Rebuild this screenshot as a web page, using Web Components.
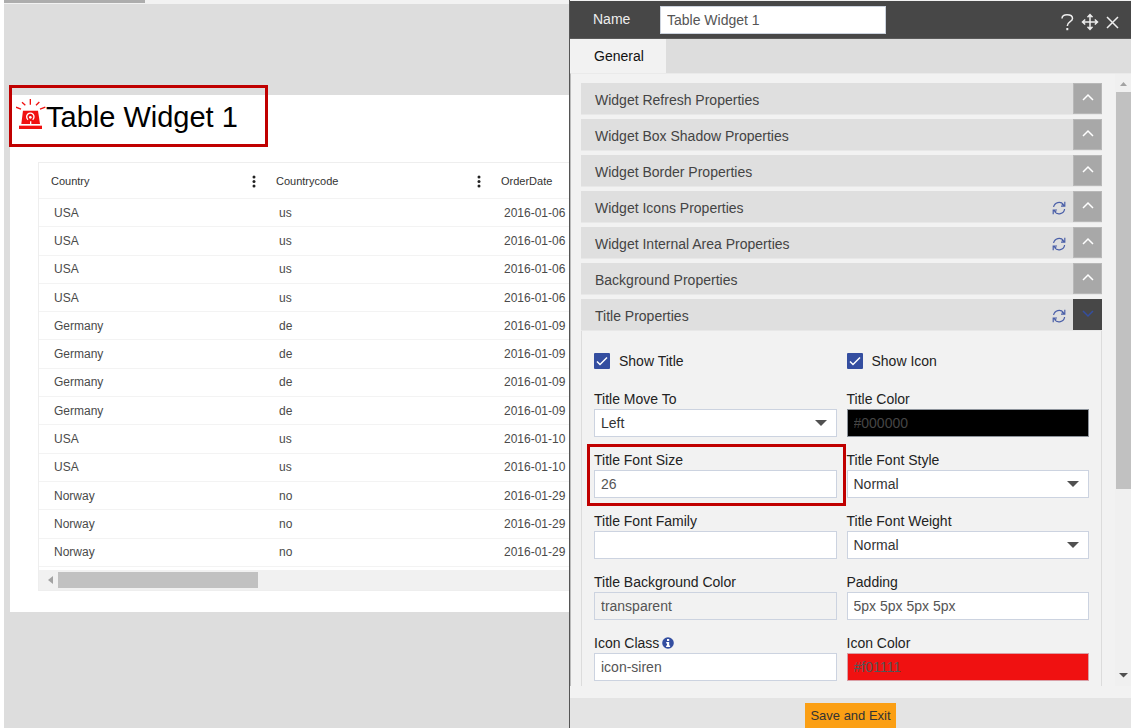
<!DOCTYPE html>
<html lang="en">
<head>
<meta charset="utf-8">
<title>Widget settings</title>
<style>
  body { margin: 0; background: #fff; font-family: "Liberation Sans", Arial, sans-serif; font-size: 14px; color: #222; }
</style>
</head>
<body>
<designer-page>
  <canvas-area slot="canvas">
    <table-widget heading="Table Widget 1"><data-grid></data-grid></table-widget>
  </canvas-area>
  <settings-panel slot="panel" name="Table Widget 1">
    <prop-section heading="Widget Refresh Properties"></prop-section>
    <prop-section heading="Widget Box Shadow Properties"></prop-section>
    <prop-section heading="Widget Border Properties"></prop-section>
    <prop-section heading="Widget Icons Properties" reset></prop-section>
    <prop-section heading="Widget Internal Area Properties" reset></prop-section>
    <prop-section heading="Background Properties"></prop-section>
    <prop-section heading="Title Properties" reset open>
      <check-field label="Show Title"></check-field>
      <check-field label="Show Icon"></check-field>
      <select-field label="Title Move To" options="Left,Center,Right"></select-field>
      <text-field label="Title Color" value="#000000" style="--field-bg:#000;--field-ink:#454545;--field-line:#8d939b"></text-field>
      <text-field label="Title Font Size" value="26" highlight></text-field>
      <select-field label="Title Font Style" options="Normal,Italic,Oblique"></select-field>
      <text-field label="Title Font Family" value=""></text-field>
      <select-field label="Title Font Weight" options="Normal,Bold,Lighter"></select-field>
      <text-field label="Title Background Color" value="transparent" style="--field-bg:#f2f2f2"></text-field>
      <text-field label="Padding" value="5px 5px 5px 5px"></text-field>
      <text-field label="Icon Class" value="icon-siren" info></text-field>
      <text-field label="Icon Color" value="#f01111" style="--field-bg:#f01111;--field-line:#d9a0a8"></text-field>
    </prop-section>
  </settings-panel>
</designer-page>

<script>
class BaseElement extends HTMLElement {
  connectedCallback() {
    if (this.shadowRoot) return;
    this.attachShadow({ mode: 'open' }).innerHTML =
      '<style>*{box-sizing:border-box}button,input,select{font:inherit;margin:0}' + this.css() + '</style>' + this.html();
  }
  css() { return ''; }
  html() { return '<slot></slot>'; }
  attr(name) { return this.getAttribute(name) || ''; }
}

customElements.define('designer-page', class extends BaseElement {
  css() { return `
    :host { display: grid; grid-template-columns: minmax(0, 565fr) minmax(0, 562fr); height: 100vh; padding-left: 4px; box-sizing: border-box; overflow: hidden; }
    slot { display: contents; }`; }
  html() { return '<slot name="canvas"></slot><slot name="panel"></slot>'; }
});

customElements.define('canvas-area', class extends BaseElement {
  css() { return `
    :host { display: flex; flex-direction: column; background: #ddd; min-width: 0; }
    .strip { flex: none; height: 4px; background: #f2f2f2; }
    .bar { width: 25%; height: 3px; background: #adadad; }
    .stage { padding: 91px 0 0 6px; }`; }
  html() { return '<div class="strip"><div class="bar"></div></div><div class="stage"><slot></slot></div>'; }
});

customElements.define('table-widget', class extends BaseElement {
  css() { return `
    :host { display: block; background: #fff; padding-bottom: 21px; }
    header { position: relative; display: flex; align-items: flex-start; height: 67px; padding: 4px 0 0 6px; box-sizing: border-box; }
    svg { flex: none; width: 30px; height: 30px; }
    h1 { margin: 0; font-size: 29px; line-height: 36px; font-weight: 400; color: #000; }
    .mark { position: absolute; left: -1px; top: -10px; width: 259px; height: 62px; border: 3px solid #c00000; }
    .body { padding-left: 28px; }`; }
  html() { return `
    <header>
      <svg viewBox="48 297 90 90" aria-hidden="true">
        <path d="M48 321.500l15 6M66 307l10 9M91 297v17M108 316l10-10M120 327.500l16-6" fill="none" stroke="#f01111" stroke-width="4"/>
        <path d="M69 332h45l6 40H64z" fill="#f01111"/>
        <path d="M57 377h69v10H57z" fill="#f01111"/>
        <path d="M84 359a11 11 0 1 1 14 0M92 364v9" fill="none" stroke="#fff" stroke-width="4"/>
        <circle cx="91" cy="352" r="4" fill="#fff"/>
      </svg>
      <h1>${this.attr('heading')}</h1>
      <div class="mark"></div>
    </header>
    <div class="body"><slot></slot></div>`; }
});

customElements.define('data-grid', class extends BaseElement {
  css() { return `
    :host { display: block; overflow: hidden; border: 1px solid #eee; border-right: 0; }
    table { width: 675px; height: 404px; table-layout: fixed; border-collapse: separate; border-spacing: 0; }
    th, td { padding: 0; text-align: left; font-weight: 400; border-bottom: 1px solid #f3f3f3; white-space: nowrap; }
    th { height: 36px; padding: 0 6px 0 12px; font-size: 11px; color: #333; }
    th div { display: flex; align-items: center; justify-content: space-between; }
    th svg { width: 8px; height: 14px; }
    td { height: 28px; padding-left: 15px; font-size: 12px; color: #4a4a4a; }
    .wrap { padding-bottom: 3px; }
    .scroll { display: flex; align-items: center; height: 20px; background: #f1f1f1; padding-left: 7px; gap: 4px; }
    .scroll svg { width: 8px; height: 8px; }
    .thumb { width: 200px; height: 16px; background: #c1c1c1; }`; }
  html() {
    const dots = '<svg viewBox="0 0 8 14"><g fill="#222"><circle cx="4" cy="3" r="1.500"/><circle cx="4" cy="7.500" r="1.500"/><circle cx="4" cy="12" r="1.500"/></g></svg>';
    const rows = [];
    const add = (n, a, b, c) => { for (let i = 0; i < n; i++) rows.push([a, b, c]); };
    add(4, 'USA', 'us', '2016-01-06');
    add(4, 'Germany', 'de', '2016-01-09');
    add(2, 'USA', 'us', '2016-01-10');
    add(3, 'Norway', 'no', '2016-01-29');
    return `<div class="wrap"><table>
      <thead><tr>${['Country', 'Countrycode', 'OrderDate'].map(h => `<th scope="col"><div>${h}${dots}</div></th>`).join('')}</tr></thead>
      <tbody>${rows.map(r => '<tr>' + r.map(c => `<td>${c}</td>`).join('') + '</tr>').join('')}</tbody></table></div>
      <div class="scroll"><svg viewBox="0 0 8 8"><path d="M7 0v8L2 4z" fill="#a3a3a3"/></svg><div class="thumb"></div></div>`;
  }
});

customElements.define('settings-panel', class extends BaseElement {
  css() { return `
    :host { display: flex; flex-direction: column; min-width: 0; height: 100vh; box-sizing: border-box; padding-top: 1px; background: #f2f2f2; border-left: 1px solid #555; }
    header { flex: none; display: flex; align-items: center; height: 38px; padding: 0 12px 0 23px; background: #474747; border-bottom: 1px solid #5a5a5a; color: #eee; }
    header label { width: 67px; padding-bottom: 2px; }
    header input { width: 226px; height: 28px; padding: 0 6px; border: 1px solid #ccd3de; background: #fff; color: #555; border-radius: 0; }
    .tools { display: flex; align-items: center; margin-left: auto; gap: 6px; padding-top: 4px; }
    .tools button { display: block; padding: 0; border: 0; background: none; height: 18px; }
    .tools svg { display: block; fill: none; stroke: #eee; stroke-width: 1.500; }
    nav { flex: none; display: flex; height: 34px; background: #ddd; }
    nav a { display: flex; align-items: center; padding: 0 22px 0 24px; background: #f2f2f2; color: #111; text-decoration: none; }
    .main { flex: 1; min-height: 0; display: flex; margin-bottom: 12px; border-top: 1px solid #eaeaea; border-left: 1px solid #bbb; }
    .list { flex: 1; min-width: 0; display: flex; flex-direction: column; gap: 4px; padding: 9px 13px 0 10px; overflow: hidden; }
    footer { flex: none; display: flex; justify-content: center; align-items: flex-end; height: 30px; background: #e4e4e4; overflow: hidden; }
    footer button { height: 25px; padding: 0 5px; border: 0; background: #fb9f14; color: #333; font-size: 13px; }`; }
  html() { return `
    <header>
      <label for="name">Name</label><input id="name" type="text" value="${this.attr('name')}">
      <div class="tools">
        <button aria-label="Help"><svg width="16" height="18" viewBox="0 0 16 18"><path d="M3 5.500C3 3 5 1.800 8 1.800s5.500 1.200 5.500 3.700C13.500 9 8.300 8.500 8.300 13"/><path d="M8.300 15v2.200" stroke-width="2"/></svg></button>
        <button aria-label="Move"><svg width="18" height="18" viewBox="0 0 18 18"><path d="M9 2v14M2 9h14M6.500 4.200L9 1.500l2.500 2.700M6.500 13.800L9 16.500l2.500-2.700M4.200 6.500L1.500 9l2.700 2.500M13.800 6.500L16.500 9l-2.700 2.500"/></svg></button>
        <button aria-label="Close"><svg width="14" height="18" viewBox="0 0 14 18"><path d="M2 4l11 11M13 4L2 15"/></svg></button>
      </div>
    </header>
    <nav><a href="#general">General</a></nav>
    <div class="main"><div class="list"><slot></slot></div><scroll-rail></scroll-rail></div>
    <footer><button>Save and Exit</button></footer>`; }
});

customElements.define('scroll-rail', class extends BaseElement {
  css() { return `
    :host { flex: none; display: flex; flex-direction: column; width: 16px; background: #f0f0f0; }
    svg { display: block; width: 16px; height: 18px; flex: none; }
    .track { flex: 1; padding-left: 1px; }
    .thumb { height: 69%; background: #c1c1c1; }`; }
  html() { return `
    <svg viewBox="0 0 16 18"><path d="M5 12l3.500-4L12 12z" fill="#a3a3a3"/></svg>
    <div class="track"><div class="thumb"></div></div>
    <svg viewBox="0 0 16 18"><path d="M4 5h9l-4.500 4.500z" fill="#505050"/></svg>`; }
});

customElements.define('prop-section', class extends BaseElement {
  css() { return `
    :host { display: block; flex: none; }
    .bar { display: flex; align-items: center; height: 32px; background: #dfdfdf; border-bottom: 1px solid #e8e8e8; }
    h2 { flex: 1; margin: 0; padding: 2px 0 0 14px; font-size: 14px; line-height: 20px; font-weight: 400; color: #444; }
    button { display: flex; align-items: center; justify-content: center; padding: 0; border: 0; background: none; }
    svg { display: block; fill: none; }
    .reset { width: 14px; height: 16px; padding-top: 2px; margin-right: 7px; }
    .toggle { width: 29px; height: 31px; padding-bottom: 2px; background: #a8a8a8; border: 1px solid #b8b8b8; }
    .toggle.open { background: #474747; border-color: #474747; }
    .fields { display: grid; grid-template-columns: 1fr 1fr; column-gap: 10px; row-gap: 13px; padding: 21px 12px 8px; border: 1px solid #dcdcdc; border-top: 0; border-bottom: 0; }`; }
  html() {
    const open = this.hasAttribute('open');
    const reset = this.hasAttribute('reset') ? `<button class="reset" aria-label="Reset"><svg width="14" height="14" viewBox="0 0 14 14"><path d="M1.600 6A5.600 5.600 0 0 1 11.500 3.500M12.600 8A5.600 5.600 0 0 1 2.500 10.500M12.800 .800v4.300H9M1.200 13.200V9H5M12.800 5.100l-3-2M1.200 9l3 2" stroke="#4a5fa8" stroke-width="1.200"/></svg></button>` : '';
    const chev = open ? '<path d="M1 2l5 5 5-5" stroke="#344ea0" stroke-width="1.500"/>' : '<path d="M1 7l5-5 5 5" stroke="#fff" stroke-width="1.500"/>';
    return `<div class="bar"><h2>${this.attr('heading')}</h2>${reset}
      <button class="toggle${open ? ' open' : ''}" aria-label="Toggle section" aria-expanded="${open}"><svg width="12" height="9" viewBox="0 0 12 9">${chev}</svg></button></div>
      ${open ? '<div class="fields"><slot></slot></div>' : ''}`;
  }
});

customElements.define('check-field', class extends BaseElement {
  css() { return `
    :host { display: block; padding-bottom: 6px; }
    label { position: relative; display: flex; align-items: center; gap: 9px; height: 18px; color: #222; }
    input { appearance: none; width: 16px; height: 16px; background: #344ea0; border-radius: 1px; }
    svg { position: absolute; left: 0; top: 1px; width: 16px; height: 16px; pointer-events: none; }`; }
  html() { return `<label><input type="checkbox" checked><svg viewBox="0 0 16 16"><path d="M3 8.500l3 3L13 4.500" fill="none" stroke="#fff" stroke-width="1.500"/></svg>${this.attr('label')}</label>`; }
});

class FieldElement extends BaseElement {
  css() { return `
    :host { display: block; position: relative; min-width: 0; }
    label { display: flex; align-items: center; gap: 3px; height: 20px; color: #222; }
    .box { position: relative; }
    input, select { display: block; width: 100%; height: 28px; padding: 0 6px; border: 1px solid var(--field-line, #ccd3e0); border-radius: 0; background: var(--field-bg, #fff); color: var(--field-ink, #555); appearance: none; }
    select { color: #333; }
    .caret { position: absolute; right: 10px; top: 11px; width: 12px; height: 7px; pointer-events: none; }
    .mark { position: absolute; inset: -6px -9px -8px -7px; border: 3px solid #c00000; pointer-events: none; }`; }
}

customElements.define('text-field', class extends FieldElement {
  html() {
    const info = this.hasAttribute('info') ? '<svg width="12" height="12" viewBox="0 0 12 12"><circle cx="6" cy="6" r="5.800" fill="#344ea0"/><path d="M5 2h2.200v2H5zM4.200 5h3v3.600h.900V10H4.100V8.600H5V6.400h-.800z" fill="#fff"/></svg>' : '';
    return `<label for="f">${this.attr('label')}${info}</label><input id="f" type="text" value="${this.attr('value')}">${this.hasAttribute('highlight') ? '<div class="mark"></div>' : ''}`;
  }
});

customElements.define('select-field', class extends FieldElement {
  html() {
    return `<label for="f">${this.attr('label')}</label><div class="box"><select id="f">${this.attr('options').split(',').map(o => `<option>${o}</option>`).join('')}</select>
      <svg class="caret" viewBox="0 0 12 7"><path d="M0 0h12L6 6z" fill="#505050"/></svg></div>`;
  }
});
</script>
</body>
</html>
